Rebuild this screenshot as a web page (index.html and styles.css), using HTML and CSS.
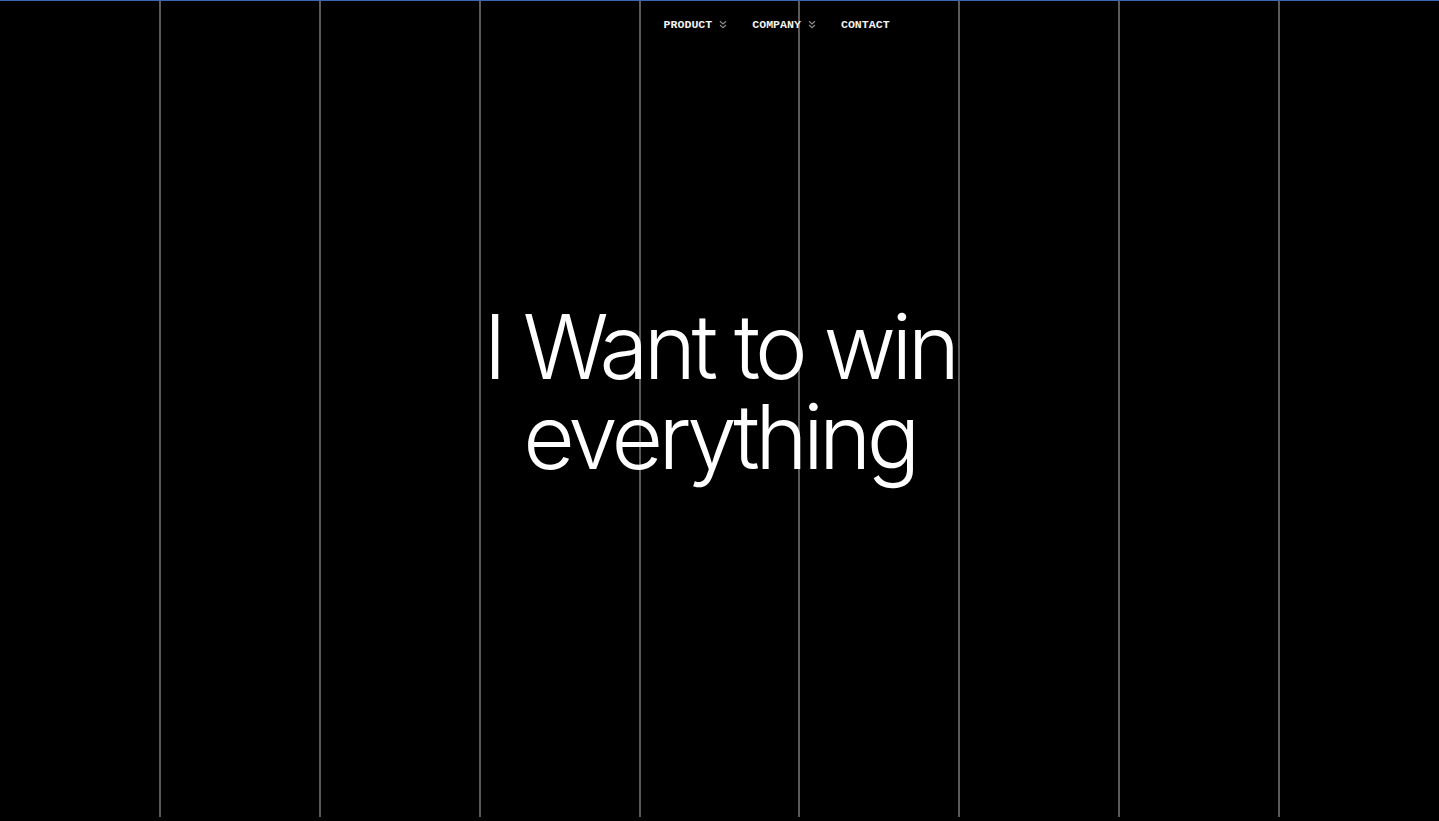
FILE: index.html
```html
<!DOCTYPE html>
<html lang="en">
<head>
<meta charset="utf-8">
<title>I Want to win everything</title>
<link rel="stylesheet" href="styles.css">
</head>
<body>
<div class="page">
  <div class="col"></div>
  <div class="col"></div>
  <div class="col"></div>
  <div class="col"></div>
  <div class="col"></div>
  <div class="col"></div>
  <div class="col"></div>
  <div class="col"></div>
  <div class="col"></div>

  <nav class="nav">
    <a class="nav-item" href="#">PRODUCT
      <svg class="chev" viewBox="0 0 8 9" width="8" height="9"><path d="M1 1.2 L4 4 L7 1.2 M1 5 L4 7.8 L7 5" fill="none" stroke="#8a8a8a" stroke-width="1.2"/></svg>
    </a>
    <a class="nav-item" href="#">COMPANY
      <svg class="chev" viewBox="0 0 8 9" width="8" height="9"><path d="M1 1.2 L4 4 L7 1.2 M1 5 L4 7.8 L7 5" fill="none" stroke="#8a8a8a" stroke-width="1.2"/></svg>
    </a>
    <a class="nav-item" href="#">CONTACT</a>
  </nav>

  <h1 class="headline">I Want to win<br>everything</h1>
</div>
</body>
</html>
```

FILE: styles.css
```css
html, body {
  margin: 0;
  padding: 0;
  background: #000;
}

body {
  height: 821px;
  overflow: hidden;
}

.page {
  display: grid;
  grid-template-columns: repeat(9, 1fr);
  grid-template-rows: 47px 1fr;
  height: 816px;
  border-top: 1px solid #3d64b4;
}

.col {
  grid-row: 1 / -1;
  border-left: 1px solid #5a5a5a;
  border-right: 1px solid #5a5a5a;
}

.col:first-child {
  border-left: none;
}

.col:nth-child(9) {
  border-right: none;
}

.col:nth-child(1) { grid-column: 1; }
.col:nth-child(2) { grid-column: 2; }
.col:nth-child(3) { grid-column: 3; }
.col:nth-child(4) { grid-column: 4; }
.col:nth-child(5) { grid-column: 5; }
.col:nth-child(6) { grid-column: 6; }
.col:nth-child(7) { grid-column: 7; }
.col:nth-child(8) { grid-column: 8; }
.col:nth-child(9) { grid-column: 9; }

.nav {
  grid-row: 1;
  grid-column: 5 / 9;
  z-index: 1;
  display: flex;
  align-items: center;
  gap: 25px;
  padding-left: 24px;
}

.nav-item {
  display: flex;
  align-items: center;
  gap: 7px;
  color: #f2f2f2;
  text-decoration: none;
  font-family: "Liberation Mono", "DejaVu Sans Mono", monospace;
  font-weight: 700;
  font-size: 11.6px;
  letter-spacing: 0;
}

.chev {
  display: block;
}

.headline {
  grid-row: 2;
  grid-column: 1 / -1;
  z-index: 1;
  align-self: center;
  margin: 0 0 82px 0;
  text-align: center;
  color: #fff;
  font-family: "Inter", "Liberation Sans", sans-serif;
  font-weight: 300;
  font-size: 89px;
  line-height: 90px;
  letter-spacing: -0.052em;
}
```
